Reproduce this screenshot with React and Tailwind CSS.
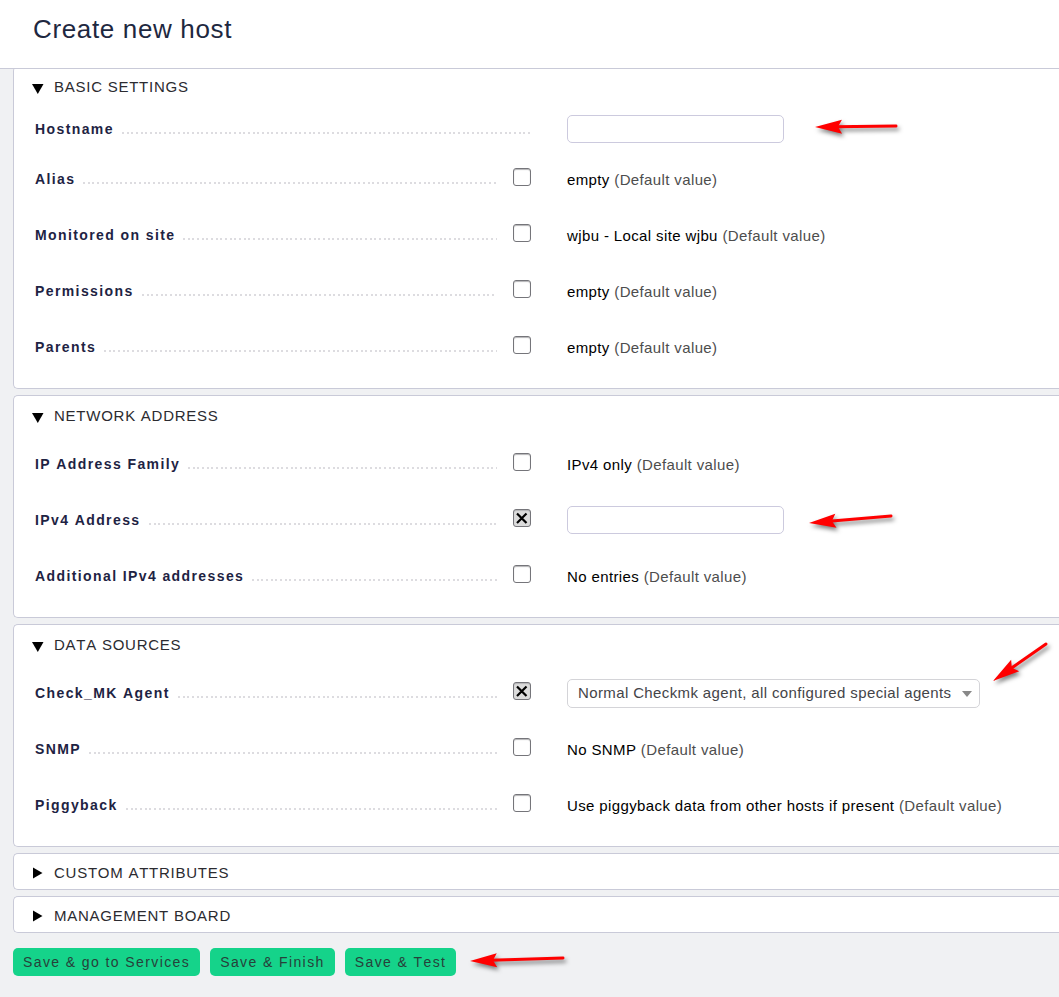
import React, { useState } from "react";

function Arrow({ className, width, height, from, to }) {
  const dx = to[0] - from[0];
  const dy = to[1] - from[1];
  const len = Math.hypot(dx, dy);
  const ux = dx / len;
  const uy = dy / len;
  const at = (back, side) =>
    `${to[0] - ux * back - uy * side},${to[1] - uy * back + ux * side}`;
  return (
    <svg
      aria-hidden="true"
      width={width}
      height={height}
      className={`pointer-events-none absolute overflow-visible drop-shadow-[2px_3px_2px_rgba(0,0,0,0.5)] ${className}`}
    >
      <line
        x1={from[0]}
        y1={from[1]}
        x2={to[0] - ux * 20}
        y2={to[1] - uy * 20}
        stroke="#ff0000"
        strokeWidth="3"
        strokeLinecap="round"
      />
      <polygon points={`${at(0, 0)} ${at(27, 7)} ${at(23, 0)} ${at(27, -7)}`} fill="#ff0000" />
    </svg>
  );
}

function CheckBox({ id, checked, label }) {
  return (
    <span className="relative -mt-1 block size-[18px]">
      <input
        id={id}
        type="checkbox"
        defaultChecked={checked}
        aria-label={label}
        className="peer block size-[18px] appearance-none rounded-[3px] border border-[#75757a] bg-white shadow-[inset_0_1px_1px_#b4b4b6] checked:bg-[#dcdcdc]"
      />
      <svg
        aria-hidden="true"
        viewBox="0 0 18 18"
        className="pointer-events-none absolute inset-0 hidden size-[18px] peer-checked:block"
      >
        <path d="M4 4.5 L13.5 14 M13.5 4.5 L4 14" stroke="#000" strokeWidth="2.2" fill="none" />
      </svg>
    </span>
  );
}

function Row({ id, label, checkbox = true, checked = false, children }) {
  return (
    <div
      className={
        checkbox
          ? "grid h-14 grid-cols-[minmax(0,462px)_18px_1fr] items-center"
          : "grid h-11 grid-cols-[minmax(0,498px)_1fr] items-center"
      }
    >
      <div className="flex items-center gap-2">
        <label
          htmlFor={id}
          className="shrink-0 text-[14px] leading-5 font-bold tracking-widest text-[#1e2343]"
        >
          {label}
        </label>
        <span className="mt-[7px] h-[2px] min-w-0 flex-1 bg-[repeating-linear-gradient(to_right,#dddce0_0_2px,transparent_2px_5px,#dddce0_5px_7px,transparent_7px_9px,#dddce0_9px_11px,transparent_11px_14px)]" />
      </div>
      {checkbox && (
        <span className="ml-4">
          <CheckBox
            id={checked ? `${id}-enabled` : id}
            checked={checked}
            label={checked ? `Set ${label}` : undefined}
          />
        </span>
      )}
      <div className={checkbox ? "ml-[52px]" : "ml-[34px]"}>{children}</div>
    </div>
  );
}

function DefaultValue({ children }) {
  return (
    <p className="mt-px text-[15px] leading-5 tracking-wide whitespace-nowrap text-black">
      {children} <span className="text-[#4d4d4d]">(Default value)</span>
    </p>
  );
}

function TextField({ id, children }) {
  return (
    <div className="relative w-[217px]">
      <input
        id={id}
        type="text"
        className="block h-7 w-full rounded-[5px] border border-[#cccade] bg-white px-2 text-[15px] tracking-wide"
      />
      {children}
    </div>
  );
}

function Section({ title, defaultOpen = false, className = "", children }) {
  const [open, setOpen] = useState(defaultOpen);
  return (
    <section className={`rounded-l-[5px] border border-r-0 border-[#c9cad8] bg-white ${className}`}>
      <h2>
        <button
          type="button"
          aria-expanded={open}
          onClick={() => setOpen(!open)}
          className={`flex w-full items-center gap-[10px] pl-[18px] text-left text-[15px] leading-5 tracking-wider text-[#2b2b30] ${
            open ? "h-10 pb-px" : "h-[35px] pt-[3px]"
          }`}
        >
          <svg
            aria-hidden="true"
            width="12"
            height="12"
            viewBox="0 0 12 12"
            className={open ? "mt-1" : ""}
          >
            <path d={open ? "M0 1 H11.5 L5.8 11 Z" : "M1 0.5 L10.5 6 L1 11.5 Z"} fill="#000" />
          </svg>
          {title}
        </button>
      </h2>
      {open && children && <div className="pb-[13px] pl-[21px]">{children}</div>}
    </section>
  );
}

function ActionButton({ children }) {
  return (
    <button
      type="button"
      className="h-7 rounded-[5px] bg-[#15d38a] px-[10px] text-[14px] leading-5 tracking-widest whitespace-nowrap text-[#27413a]"
    >
      {children}
    </button>
  );
}

export default function App() {
  return (
    <div className="min-h-screen overflow-x-hidden bg-[#f0f1f3] font-['Liberation_Sans',Arial,sans-serif] [font-kerning:none]">
      <header className="relative z-10 border-b border-[#c9cad8] bg-white pt-[14px] pb-6 pl-[33px]">
        <h1 className="text-[26px] leading-[30px] tracking-wide text-[#1e2840]">Create new host</h1>
      </header>
      <form className="flex flex-col gap-[6px] pb-5 pl-[13px]" onSubmit={(e) => e.preventDefault()}>
        <Section title="BASIC SETTINGS" defaultOpen className="-mt-[3px]">
          <Row id="hostname" label="Hostname" checkbox={false}>
            <TextField id="hostname">
              <Arrow className="top-0 left-[248px]" width={84} height={28} from={[81, 11]} to={[0, 12]} />
            </TextField>
          </Row>
          <Row id="alias" label="Alias">
            <DefaultValue>empty</DefaultValue>
          </Row>
          <Row id="site" label="Monitored on site">
            <DefaultValue>wjbu - Local site wjbu</DefaultValue>
          </Row>
          <Row id="permissions" label="Permissions">
            <DefaultValue>empty</DefaultValue>
          </Row>
          <Row id="parents" label="Parents">
            <DefaultValue>empty</DefaultValue>
          </Row>
        </Section>

        <Section title="NETWORK ADDRESS" defaultOpen>
          <Row id="family" label="IP Address Family">
            <DefaultValue>IPv4 only</DefaultValue>
          </Row>
          <Row id="ipv4" label="IPv4 Address" checked>
            <TextField id="ipv4">
              <Arrow className="top-0 left-[242px]" width={84} height={28} from={[82, 10]} to={[0, 17]} />
            </TextField>
          </Row>
          <Row id="more-ipv4" label="Additional IPv4 addresses">
            <DefaultValue>No entries</DefaultValue>
          </Row>
        </Section>

        <Section title="DATA SOURCES" defaultOpen>
          <Row id="agent" label="Check_MK Agent" checked>
            <div className="relative w-[413px]">
              <select
                id="agent"
                className="block h-[29px] w-full appearance-none rounded-[5px] border border-[#d4d4d8] bg-white pt-px pl-[10px] text-[15px] tracking-wide text-[#444448] [font-kerning:none]"
              >
                <option>Normal Checkmk agent, all configured special agents</option>
              </select>
              <svg
                aria-hidden="true"
                width="10"
                height="6"
                viewBox="0 0 10 6"
                className="pointer-events-none absolute top-3 right-2"
              >
                <path d="M0 0 H10 L5 6 Z" fill="#888888" />
              </svg>
              <Arrow
                className="-top-9 left-[426px]"
                width={54}
                height={40}
                from={[53, 1]}
                to={[0, 38]}
              />
            </div>
          </Row>
          <Row id="snmp" label="SNMP">
            <DefaultValue>No SNMP</DefaultValue>
          </Row>
          <Row id="piggyback" label="Piggyback">
            <DefaultValue>Use piggyback data from other hosts if present</DefaultValue>
          </Row>
        </Section>

        <Section title="CUSTOM ATTRIBUTES" />
        <Section title="MANAGEMENT BOARD" />

        <div className="mt-[9px] flex gap-[10px]">
          <ActionButton>Save &amp; go to Services</ActionButton>
          <ActionButton>Save &amp; Finish</ActionButton>
          <div className="relative">
            <ActionButton>Save &amp; Test</ActionButton>
            <Arrow className="top-0 left-[125px]" width={94} height={28} from={[93, 10]} to={[0, 13]} />
          </div>
        </div>
      </form>
    </div>
  );
}
